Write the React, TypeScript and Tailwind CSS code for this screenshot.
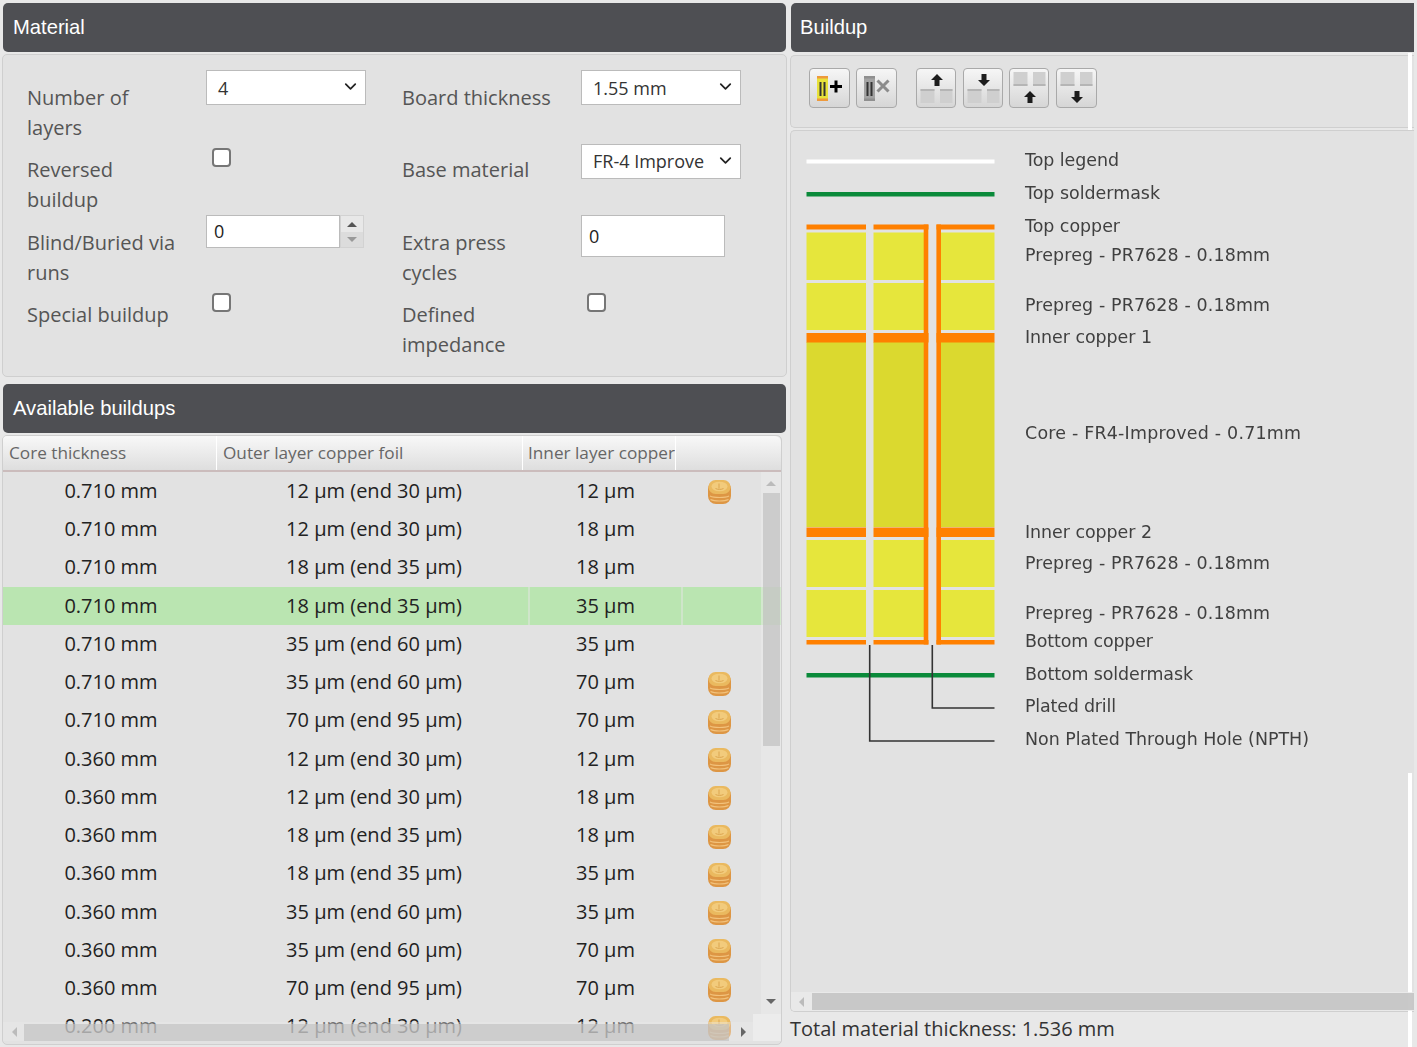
import { ChevronDown } from "lucide-react";

const rows = [
  ["0.710 mm", "12 µm (end 30 µm)", "12 µm", true],
  ["0.710 mm", "12 µm (end 30 µm)", "18 µm", false],
  ["0.710 mm", "18 µm (end 35 µm)", "18 µm", false],
  ["0.710 mm", "18 µm (end 35 µm)", "35 µm", false],
  ["0.710 mm", "35 µm (end 60 µm)", "35 µm", false],
  ["0.710 mm", "35 µm (end 60 µm)", "70 µm", true],
  ["0.710 mm", "70 µm (end 95 µm)", "70 µm", true],
  ["0.360 mm", "12 µm (end 30 µm)", "12 µm", true],
  ["0.360 mm", "12 µm (end 30 µm)", "18 µm", true],
  ["0.360 mm", "18 µm (end 35 µm)", "18 µm", true],
  ["0.360 mm", "18 µm (end 35 µm)", "35 µm", true],
  ["0.360 mm", "35 µm (end 60 µm)", "35 µm", true],
  ["0.360 mm", "35 µm (end 60 µm)", "70 µm", true],
  ["0.360 mm", "70 µm (end 95 µm)", "70 µm", true],
  ["0.200 mm", "12 µm (end 30 µm)", "12 µm", true],
] as const;

const labels: Array<[string, number, number]> = [
  ["Top legend", 159, 94],
  ["Top soldermask", 192, 135],
  ["Top copper", 225, 95],
  ["Prepreg - PR7628 - 0.18mm", 254, 245],
  ["Prepreg - PR7628 - 0.18mm", 304, 245],
  ["Inner copper 1", 336, 127],
  ["Core - FR4-Improved - 0.71mm", 432, 276],
  ["Inner copper 2", 531, 127],
  ["Prepreg - PR7628 - 0.18mm", 562, 245],
  ["Prepreg - PR7628 - 0.18mm", 612, 245],
  ["Bottom copper", 640, 128],
  ["Bottom soldermask", 673, 168],
  ["Plated drill", 705, 91],
  ["Non Plated Through Hole (NPTH)", 738, 284],
];

const Header = ({ title, className }: { title: string; className: string }) => (
  <div
    className={`h-[49px] rounded-[5px] bg-[#4e4f53] flex items-center pb-[1px] text-white text-[20.2px] font-['Liberation_Sans',sans-serif] ${className}`}
  >
    {title}
  </div>
);

const Label = ({ children, top }: { children: React.ReactNode; top: string }) => (
  <div className={`w-[150px] shrink-0 text-[20px] leading-[30px] text-[#555] ${top}`}>
    {children}
  </div>
);

const Check = ({ top }: { top: string }) => (
  <input
    type="checkbox"
    className={`appearance-none block w-[19px] h-[19px] ml-[6px] bg-white border-2 border-[#767676] rounded-[4px] ${top}`}
  />
);

const Select = ({ value, leading }: { value: string; leading: string }) => (
  <div className={`relative w-[160px] h-[35px] bg-white border border-[#bbb] pl-[11px] text-[18px] text-[#333] whitespace-nowrap ${leading}`}>
    {value}
    <ChevronDown
      size={19}
      strokeWidth={2.2}
      className="absolute right-[5px] top-[6px] text-[#222]"
    />
  </div>
);

const Coin = () => (
  <svg width="23" height="24" viewBox="0 0 23 24" className="blur-[0.4px]">
    <rect x="0" y="1" width="23" height="23" rx="8" fill="#dd9644" />
    <path d="M2 16c4 2 15 2 19 0M2.5 19.5c4 2 14 2 18 0" fill="none" stroke="#f2c27c" strokeWidth="1.2" />
    <rect x="0.5" y="0" width="22" height="14" rx="7" fill="#eab95f" />
    <ellipse cx="11.5" cy="6.5" rx="8" ry="4.8" fill="#f2cb7c" />
    <path d="M7.5 8.5c2 1.2 6 1.2 8 0M11 3.5v5" stroke="#dca54f" strokeWidth="1" fill="none" />
  </svg>
);

const ToolButton = ({ className, children }: { className: string; children: React.ReactNode }) => (
  <button
    className={`h-[40px] rounded-[4px] border border-[#a9a9a9] bg-gradient-to-b from-[#f6f6f6] to-[#d6d6d6] overflow-hidden ${className}`}
  >
    <svg width="39" height="38" viewBox="0 0 39 38" className="block blur-[0.35px]">
      {children}
    </svg>
  </button>
);

const Stack = ({ on }: { on: boolean }) => (
  <>
    <rect x="7" y="7" width="11" height="25" fill={on ? "#e8e23a" : "#a3a3a3"} />
    <rect x="7" y="7" width="11" height="2.5" fill={on ? "#ee9a3c" : "#8f8f8f"} />
    <rect x="7" y="29.5" width="11" height="2.5" fill={on ? "#ee9a3c" : "#8f8f8f"} />
    <rect x="9.5" y="13" width="2" height="14" fill="#333" />
    <rect x="13.5" y="13" width="2" height="14" fill="#333" />
  </>
);

const Move = ({ up, top }: { up: boolean; top: boolean }) => {
  // the pad pair sits under the arrow on the first two buttons, over it on the last two
  const padY = top ? 3 : 20;
  const arrowY = top ? 22 : 5;
  return (
    <>
      <rect x="3.5" y={padY} width="14" height="14" fill="#cfcfcf" />
      <rect x="3.5" y={padY + (top ? 12 : 0)} width="14" height="2" fill="#b5b5b5" />
      <rect x="23" y={padY} width="12.5" height="14" fill="#cfcfcf" />
      <rect x="23" y={padY + (top ? 12 : 0)} width="12.5" height="2" fill="#b5b5b5" />
      {up ? (
        <path d={`M20 ${arrowY}l6 6h-3.5v6h-5v-6H14z`} fill="#1c1c1c" />
      ) : (
        <path d={`M17.5 ${arrowY}h5v6H26l-6 6-6-6h3.5z`} fill="#1c1c1c" />
      )}
    </>
  );
};

const Buildup = () => (
  <svg width="560" height="640" viewBox="791 131 560 640" className="block blur-[0.35px]">
    <rect x="806.5" y="159.5" width="188" height="4" fill="#fff" />
    <rect x="806.5" y="192" width="188" height="4.5" fill="#0a8a3a" />
    {[
      [806.5, 59.5],
      [873.5, 50.5],
      [941, 53.5],
    ].map(([x, w]) => (
      <g key={x}>
        <rect x={x} y="232.5" width={w} height="47.5" fill="#e6e63c" />
        <rect x={x} y="283" width={w} height="47" fill="#e6e63c" />
        <rect x={x} y="342" width={w} height="185" fill="#dbd92f" />
        <rect x={x} y="540" width={w} height="47" fill="#e6e63c" />
        <rect x={x} y="590" width={w} height="47" fill="#e6e63c" />
      </g>
    ))}
    {[
      [806.5, 59.5],
      [873.5, 55],
      [936.5, 58],
    ].map(([x, w]) => (
      <g key={x} fill="#ff8000">
        <rect x={x} y="224.5" width={w} height="5" />
        <rect x={x} y="333" width={w} height="9.5" />
        <rect x={x} y="527.5" width={w} height="9.5" />
        <rect x={x} y="640" width={w} height="4.5" />
      </g>
    ))}
    <rect x="923.7" y="224.5" width="4.6" height="420" fill="#ff8000" />
    <rect x="936.4" y="224.5" width="4.6" height="420" fill="#ff8000" />
    <rect x="806.5" y="673" width="188" height="4.5" fill="#0a8a3a" />
    <path d="M869.7 645V741H994.5M932.3 645V708H994.5" fill="none" stroke="#333" strokeWidth="1.6" />
    {labels.map(([text, y, w]) => (
      <text
        key={`${text}-${y}`}
        x="1025"
        y={y + 6.5}
        fill="#404040"
        fontSize="17.45"
        fontFamily="'DejaVu Sans', sans-serif"
        textLength={w}
      >
        {text}
      </text>
    ))}
  </svg>
);

export default function App() {
  return (
    <div className="relative h-[1047px] overflow-hidden bg-[#e8e8e8] pt-[3px] pl-[3px] flex items-start gap-[4px] font-['Open_Sans',sans-serif]">
      {/* left column */}
      <div className="w-[783px] shrink-0">
        <Header title="Material" className="pl-[10px]" />
        <div className="-ml-px w-[785px] mt-[2px] h-[323px] rounded-[5px] border border-[#cfcfcf] bg-[#e2e2e2] pt-[15px] pl-[24px]">
          <div className="flex h-[74px]">
            <Label top="mt-[13px]">Number of layers</Label>
            <div className="w-[196px] ml-[29px]"><Select value="4" leading="leading-[34px]" /></div>
            <Label top="mt-[13px]">Board thickness</Label>
            <div className="ml-[29px]"><Select value="1.55 mm" leading="leading-[34px]" /></div>
          </div>
          <div className="flex h-[71px]">
            <Label top="mt-[11px]">Reversed buildup</Label>
            <div className="w-[196px] ml-[29px]"><Check top="mt-[4px]" /></div>
            <Label top="mt-[11px]">Base material</Label>
            <div className="ml-[29px]"><Select value="FR-4 Improve" leading="leading-[33px]" /></div>
          </div>
          <div className="flex h-[73px]">
            <Label top="mt-[13px]">Blind/Buried via runs</Label>
            <div className="w-[196px] ml-[29px] flex items-start">
              <div className="w-[134px] h-[33px] bg-white border border-[#bbb] pl-[7px] text-[18px] leading-[31px] text-[#222]">0</div>
              <div className="w-[24px] h-[33px] flex flex-col border border-[#d2d2d2]">
                <div className="h-[16px] bg-[#e8e8e8] flex items-center justify-center">
                  <div className="w-0 h-0 border-x-[5px] border-x-transparent border-b-[5px] border-b-[#555]" />
                </div>
                <div className="h-[15px] bg-[#dcdcdc] flex items-center justify-center">
                  <div className="w-0 h-0 border-x-[5px] border-x-transparent border-t-[5px] border-t-[#999]" />
                </div>
              </div>
            </div>
            <Label top="mt-[13px]">Extra press cycles</Label>
            <div className="ml-[29px] w-[144px] h-[42px] bg-white border border-[#bbb] pl-[7px] text-[18px] leading-[40px] text-[#222]">0</div>
          </div>
          <div className="flex">
            <Label top="mt-[12px]">Special buildup</Label>
            <div className="w-[196px] ml-[29px]"><Check top="mt-[5px]" /></div>
            <Label top="mt-[12px]">Defined impedance</Label>
            <div className="ml-[29px]"><Check top="mt-[5px]" /></div>
          </div>
        </div>

        <Header title="Available buildups" className="mt-[7px] pl-[10px]" />
        <div className="relative -ml-px w-[780px] mt-[2px] h-[610px] rounded-[5px] border border-[#cfcfcf] bg-[#e2e2e2] overflow-hidden">
          <div className="flex h-[35.75px] rounded-tr-[6px] overflow-hidden border-b-2 border-b-[#cbbcbc] bg-gradient-to-b from-[#f8f8f8] to-[#dedede] text-[#666] text-[17.2px] leading-[34px] whitespace-nowrap">
            <div className="w-[214px] pl-[6px] border-r border-white">Core thickness</div>
            <div className="w-[306px] pl-[6px] border-r border-white">Outer layer copper foil</div>
            <div className="w-[153px] pl-[5px] border-r border-white overflow-hidden">Inner layer copper</div>
            <div className="flex-1" />
          </div>
          {rows.map(([core, outer, inner, coin], i) => (
            <div
              key={i}
              className={`flex h-[38.25px] items-center text-[20px] text-[#222] whitespace-nowrap ${i === 3 ? "bg-[#bae5b1]" : ""}`}
            >
              <div className="w-[216px] text-center">{core}</div>
              <div className="w-[309px] pl-px h-full flex items-center justify-center">{outer}</div>
              <div className={`w-[155px] h-full flex items-center justify-center ${i === 3 ? "border-l-2 border-r-2 border-[#cfe5ca]" : ""}`}>{inner}</div>
              <div className="w-[73px] h-full flex items-center justify-center pt-[3px]">
                {coin && <Coin />}
              </div>
            </div>
          ))}

          {/* scrollbars float over the rows */}
          <div className="absolute left-[758px] top-[36px] w-[20px] h-[542px] bg-[#ebebeb]/50">
            <div className="absolute left-[5px] top-[9px] w-0 h-0 border-x-[5px] border-x-transparent border-b-[5px] border-b-[#bbb]" />
            <div className="absolute left-[2px] top-[21px] w-[17px] h-[253px] bg-[#c0c0c0]/70" />
            <div className="absolute left-[5px] top-[527px] w-0 h-0 border-x-[5px] border-x-transparent border-t-[5px] border-t-[#666]" />
          </div>
          <div className="absolute left-0 top-[586px] w-[750px] h-[19px] bg-[#ebebeb]/40">
            <div className="absolute left-[9px] top-[5px] w-0 h-0 border-y-[5px] border-y-transparent border-r-[5px] border-r-[#bbb]" />
            <div className="absolute left-[21px] top-[2px] w-[705px] h-[17px] bg-[#c0c0c0]/65" />
            <div className="absolute left-[738px] top-[5px] w-0 h-0 border-y-[5px] border-y-transparent border-l-[5px] border-l-[#666]" />
          </div>
          <div className="absolute left-[750px] top-[578px] w-[28px] h-[27px] bg-[#ececec]" />
        </div>
      </div>

      {/* right column */}
      <div className="relative w-[624px] shrink-0">
        <Header title="Buildup" className="ml-px pl-[9px] rounded-r-none" />
        <div className="mt-[3px] h-[73px] rounded-l-[5px] border border-r-0 border-[#cfcfcf] bg-[#e2e2e2] flex items-start pt-[12px] pl-[18px]">
          <ToolButton className="w-[41px]">
            <Stack on />
            <path d="M20 17.5h12M26 11.5v12" stroke="#000" strokeWidth="3" />
          </ToolButton>
          <ToolButton className="w-[41px] ml-[6px]">
            <Stack on={false} />
            <path d="M20.5 11.5l11 11M31.5 11.5l-11 11" stroke="#8c8c8c" strokeWidth="3" />
          </ToolButton>
          <ToolButton className="w-[40px] ml-[19px]"><Move up top={false} /></ToolButton>
          <ToolButton className="w-[40px] ml-[7px]"><Move up={false} top={false} /></ToolButton>
          <ToolButton className="w-[40px] ml-[6px]"><Move up top /></ToolButton>
          <ToolButton className="w-[41px] ml-[7px]"><Move up={false} top /></ToolButton>
        </div>
        <div className="relative mt-[2px] h-[882px] rounded-l-[5px] border border-r-0 border-[#cfcfcf] bg-[#e2e2e2] overflow-hidden">
          <Buildup />
          <div className="absolute z-10 left-0 right-0 bottom-0 h-[19px] bg-[#ebebeb]/80">
            <div className="absolute left-[8px] top-[5px] w-0 h-0 border-y-[5px] border-y-transparent border-r-[5px] border-r-[#bbb]" />
            <div className="absolute left-[21px] right-0 top-[1px] h-[17px] bg-[#c4c4c4]/90" />
          </div>
        </div>
        <div className="mt-[2px] text-[20px] leading-[30px] text-[#333] whitespace-nowrap">
          Total material thickness: 1.536 mm
        </div>
        {/* stray white strip at the window edge */}
        <div className="absolute left-[618px] top-[50px] w-[4px] h-[77px] bg-white" />
        <div className="absolute left-[618px] top-[770px] w-[4px] h-[274px] bg-white" />
      </div>
    </div>
  );
}
